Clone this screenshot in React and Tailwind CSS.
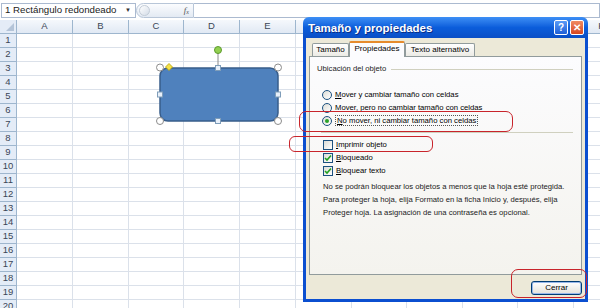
import React from 'react'

const cols = [
  ['A', 'w-[56px]'],
  ['B', 'w-[56px]'],
  ['C', 'w-[55px]'],
  ['D', 'w-[56px]'],
  ['E', 'w-[56px]'],
  ['F', 'w-[56px]'],
  ['G', 'w-[55px]'],
  ['H', 'w-[56px]'],
  ['I', 'w-[55px]'],
  ['J', 'w-[56px]'],
  ['K', 'w-[56px]'],
]

const rows = Array.from({ length: 20 }, (_, i) => i + 1)

function FormulaBar() {
  return (
    <div className="flex h-[20px] items-start bg-white pt-[3px] pl-[1px]">
      <div className="flex h-[15px] w-[135px] items-center justify-between border border-[#abbad0] bg-white pl-[3px] pr-[4px] text-[9.7px] text-[#222]">
        <span>1 Rectángulo redondeado</span>
        <span className="text-[6px] text-[#333]">▼</span>
      </div>
      <div className="flex h-[15px] w-[58px] items-center justify-between rounded-l-full border border-[#b8c6d8] bg-gradient-to-b from-[#fbfcfe] to-[#e3eaf3] pl-[2px] pr-[4px]">
        <div className="h-[11px] w-[11px] rounded-full border border-[#c3ccd7] bg-gradient-to-br from-[#ffffff] to-[#d5dde8]" />
        <span className="font-['Liberation_Serif',serif] text-[9px] italic text-[#555]">f<sub className="text-[6px]">x</sub></span>
      </div>
      <div className="h-[15px] flex-1 border-y border-r border-[#abbad0] bg-white" />
    </div>
  )
}

function Sheet() {
  return (
    <div className="flex flex-col">
      <div className="flex h-[14px]">
        <div className="relative w-[17px] shrink-0 border-r border-b border-[#9eb6ce] bg-[#e4ecf7]">
          <div className="absolute right-[2px] bottom-[2px] h-0 w-0 border-b-[8px] border-l-[8px] border-b-[#b4c4d8] border-l-transparent" />
        </div>
        {cols.map(([c, w]) => (
          <div
            key={c}
            className={`${w} flex shrink-0 items-center justify-center border-r border-b border-[#9eb6ce] bg-gradient-to-b from-[#f5f8fc] to-[#e1e9f4] text-[9.5px] text-[#3b4656]`}
          >
            {c}
          </div>
        ))}
      </div>
      {rows.map((r) => (
        <div key={r} className="flex h-[14px]">
          <div className="flex w-[17px] shrink-0 items-center justify-center border-r border-b border-[#9eb6ce] bg-[#e4ecf7] text-[9.5px] text-[#3b4656]">
            {r}
          </div>
          {cols.map(([c, w]) => (
            <div key={c} className={`${w} shrink-0 border-r border-b border-[#dbe1ea]`} />
          ))}
        </div>
      ))}
    </div>
  )
}

function Shape() {
  return (
    <svg className="absolute left-[150px] top-[40px]" width="140" height="90" viewBox="0 0 140 90">
      <line x1="68" y1="13" x2="68" y2="28" stroke="#8a8a8a" strokeWidth="1" />
      <circle cx="68" cy="10" r="3.5" fill="#92d050" stroke="#5e9a2e" strokeWidth="1" />
      <rect x="10" y="28" width="118" height="53" rx="8" fill="#4f81bd" stroke="#385d8a" strokeWidth="1.5" />
      {[[10, 27.5], [128, 27.5], [10, 81], [128, 81]].map(([x, y], i) => (
        <circle key={i} cx={x} cy={y} r="3.5" fill="#ffffff" stroke="#8c8c8c" strokeWidth="1" />
      ))}
      {[[68, 28], [10, 54.5], [128, 54.5], [68, 81]].map(([x, y], i) => (
        <rect key={i} x={x - 2.5} y={y - 2.5} width="5" height="5" fill="#e8f0fa" stroke="#7f9db9" strokeWidth="1" />
      ))}
      <polygon points="19,23.5 22.5,27 19,30.5 15.5,27" fill="#f5e24a" stroke="#b59f00" strokeWidth="0.8" />
    </svg>
  )
}

function Radio({ checked, children }) {
  return (
    <div className="flex h-[13px] items-center pl-[12px]">
      <div className="flex h-[10px] w-[10px] items-center justify-center rounded-full border border-[#1c5180] bg-gradient-to-br from-[#dcdcd6] to-[#ffffff]">
        {checked && <div className="h-[4px] w-[4px] rounded-full bg-[#2aa22a]" />}
      </div>
      <span className="ml-[3px]">{children}</span>
    </div>
  )
}

function Check({ checked, children }) {
  return (
    <div className="flex h-[13px] items-center pl-[13px]">
      <div className="flex h-[10px] w-[10px] items-center justify-center border border-[#1c5180] bg-gradient-to-br from-[#dcdcd6] to-[#ffffff]">
        {checked && (
          <svg width="8" height="8" viewBox="0 0 8 8">
            <path d="M1 4 L3 6 L7 1.5" fill="none" stroke="#21a121" strokeWidth="1.6" />
          </svg>
        )}
      </div>
      <span className="ml-[3px]">{children}</span>
    </div>
  )
}

function Dialog() {
  return (
    <div className="absolute left-[303px] top-[17px] flex h-[285px] w-[285px] flex-col font-['Liberation_Sans',Arial,sans-serif] text-[7.7px] text-black">
      <div className="flex h-[21px] shrink-0 items-center justify-between rounded-t-[6px] bg-gradient-to-b from-[#3d8ff5] via-[#0b5ddb] to-[#0a4fc6] pl-[5px] pr-[4px]">
        <span className="text-[11.5px] leading-[14px] font-bold text-white [text-shadow:1px_1px_0_#0a2e86]">Tamaño y propiedades</span>
        <div className="flex gap-[2px]">
          <div className="flex h-[15px] w-[14px] items-center justify-center rounded-[2px] border border-white bg-gradient-to-b from-[#5a9bf7] to-[#1f5fd6] text-[10px] leading-none font-bold text-white">
            ?
          </div>
          <div className="flex h-[15px] w-[14px] items-center justify-center rounded-[2px] border border-white bg-gradient-to-b from-[#f08a62] to-[#d6461e] text-[10px] leading-none font-bold text-white">
            ✕
          </div>
        </div>
      </div>
      <div className="flex flex-1 flex-col border-x-[3px] border-b-[3px] border-[#0b4fd0] bg-[#ece9d8] px-[3px] pt-[3px]">
        <div className="flex h-[15px] items-end pl-[3px] text-[8px]">
          <div className="flex h-[13px] w-[37px] items-center justify-center rounded-t-[2px] border border-b-0 border-[#919b9c] bg-gradient-to-b from-[#ffffff] to-[#ecebe5]">
            Tamaño
          </div>
          <div className="relative z-10 -mb-px flex h-[16px] w-[56px] items-center justify-center rounded-t-[2px] border-x border-t-[2px] border-[#919b9c] border-t-[#e68b2c] bg-[#fcfcfe] pb-[2px]">
            Propiedades
          </div>
          <div className="flex h-[13px] w-[70px] items-center justify-center rounded-t-[2px] border border-b-0 border-[#919b9c] bg-gradient-to-b from-[#ffffff] to-[#ecebe5]">
            Texto alternativo
          </div>
        </div>
        <div className="flex h-[219px] flex-col border border-[#919b9c] bg-gradient-to-b from-[#fcfcfe] to-[#f4f3ee]">
          <div className="mt-[7px] flex h-[10px] items-center pl-[7px] pr-[8px] text-[#222]">
            <span>Ubicación del objeto</span>
            <div className="ml-[5px] flex-1 border-t border-[#d0d0bf]" />
          </div>
          <div className="mt-[14px]">
            <Radio><u>M</u>over y cambiar tamaño con celdas</Radio>
            <Radio><u>M</u>over, pero no cambiar tamaño con celdas</Radio>
            <Radio checked>
              <span className="border border-dotted border-[#555] px-[1px]"><u>N</u>o mover, ni cambiar tamaño con celdas</span>
            </Radio>
          </div>
          <div className="mt-[5px] ml-[11px] mr-[8px] border-t border-[#d0d0bf]" />
          <div className="mt-[5px]">
            <Check><u>I</u>mprimir objeto</Check>
            <Check checked><u>B</u>loqueado</Check>
            <Check checked><u>B</u>loquear texto</Check>
          </div>
          <p className="mt-[3px] pl-[13px] leading-[13px] text-[#222]">
            No se podrán bloquear los objetos a menos que la hoja esté protegida.
            <br />
            Para proteger la hoja, elija Formato en la ficha Inicio y, después, elija
            <br />
            Proteger hoja. La asignación de una contraseña es opcional.
          </p>
        </div>
        <div className="flex justify-end pt-[6px]">
          <button className="flex h-[14px] w-[51px] items-center justify-center rounded-[3px] border border-[#003c74] bg-gradient-to-b from-[#ffffff] to-[#e3e2da] text-[8px] shadow-[inset_0_0_0_1px_#98b8ea]">
            Cerrar
          </button>
        </div>
      </div>
    </div>
  )
}

export default function App() {
  return (
    <div className="relative h-[308px] w-[600px] overflow-hidden bg-white font-['Liberation_Sans',Arial,sans-serif]">
      <FormulaBar />
      <Sheet />
      <Shape />
      <Dialog />
      <div className="absolute left-[299px] top-[111px] h-[21px] w-[214px] rounded-[7px] border-[1.5px] border-[#c8242b]" />
      <div className="absolute left-[289px] top-[136px] h-[16px] w-[144px] rounded-[6px] border-[1.5px] border-[#c8242b]" />
      <div className="absolute left-[511px] top-[269px] h-[29px] w-[76px] rounded-[7px] border-[1.5px] border-[#c8242b]" />
    </div>
  )
}
